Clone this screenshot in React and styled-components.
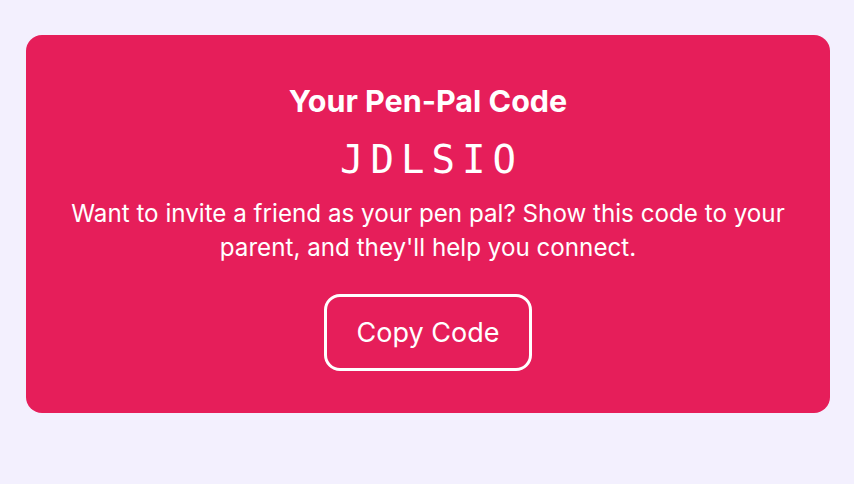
import React from "react";
import styled, { createGlobalStyle } from "styled-components";

const GlobalStyle = createGlobalStyle`
  html, body {
    margin: 0;
    padding: 0;
    background: #f3f0fe;
  }
  body {
    font-family: Inter, "Noto Sans", "Liberation Sans", sans-serif;
  }
`;

const Page = styled.div`
  padding: 35px 24px 0 26px;
`;

const Card = styled.section`
  background: #e61e5a;
  border-radius: 16px;
  width: 804px;
  box-sizing: border-box;
  padding: 47px 32px 42px;
  display: flex;
  flex-direction: column;
  align-items: center;
  color: #fff;
  text-align: center;
`;

const Title = styled.h2`
  margin: 0;
  font-size: 30.5px;
  line-height: 38px;
  font-weight: 700;
`;

const Code = styled.div`
  margin-top: 16px;
  font-family: "DejaVu Sans Mono", "Liberation Mono", monospace;
  font-size: 39px;
  line-height: 48px;
  letter-spacing: 7px;
  padding-left: 7px;
`;

const Blurb = styled.p`
  margin: 13px 0 0;
  max-width: 740px;
  font-size: 24.2px;
  line-height: 34px;
`;

const CopyButton = styled.button`
  margin-top: 29px;
  background: transparent;
  color: #fff;
  border: 3px solid #fff;
  border-radius: 16px;
  padding: 20px 30px;
  font-family: inherit;
  font-size: 27px;
  line-height: 31px;
  cursor: pointer;
`;

export default function App() {
  return (
    <Page>
      <GlobalStyle />
      <Card>
        <Title>Your Pen-Pal Code</Title>
        <Code>JDLSIO</Code>
        <Blurb>
          Want to invite a friend as your pen pal? Show this code to your
          parent, and they'll help you connect.
        </Blurb>
        <CopyButton>Copy Code</CopyButton>
      </Card>
    </Page>
  );
}
